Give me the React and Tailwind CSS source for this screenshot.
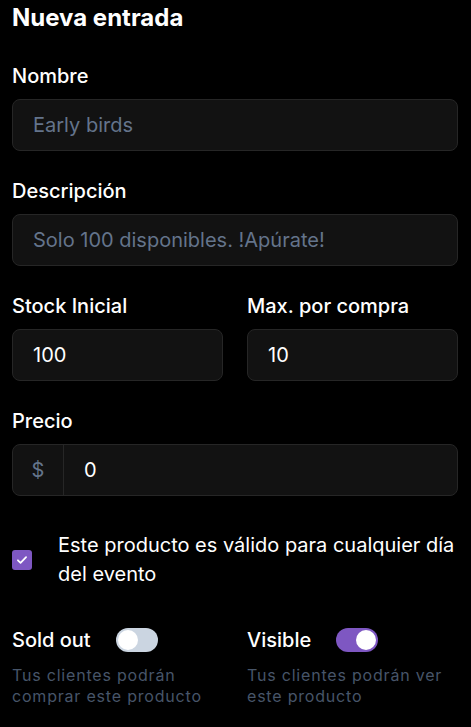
import { useState } from "react";

const inputClass =
  "h-[52px] w-full rounded-lg border border-[#262626] bg-[#121212] px-5 text-[20px] text-white outline-none placeholder:text-[#64748b]";

const labelClass = "block text-[20px] font-medium leading-[24px]";

function Toggle({ checked, onChange }) {
  return (
    <button
      className={`flex h-6 w-[42px] items-center rounded-full px-[2px] ${
        checked ? "justify-end bg-[#7e57c2]" : "justify-start bg-[#cbd5e1]"
      }`}
      onClick={() => onChange(!checked)}
      type="button"
    >
      <span className="h-5 w-5 rounded-full bg-white" />
    </button>
  );
}

export default function App() {
  const [soldOut, setSoldOut] = useState(false);
  const [visible, setVisible] = useState(true);
  const [anyDay, setAnyDay] = useState(true);

  return (
    <div
      className="min-h-[727px] bg-black pl-3 pr-[13px] pt-1 text-white"
      style={{ fontFamily: "Inter, 'Noto Sans', sans-serif" }}
    >
      <h1 className="text-[24px] font-bold leading-[28px]">Nueva entrada</h1>

      <label className={`mt-[32px] ${labelClass}`}>Nombre</label>
      <input className={`mt-[11px] ${inputClass}`} placeholder="Early birds" />

      <label className={`mt-[28px] ${labelClass}`}>Descripción</label>
      <input
        className={`mt-[11px] ${inputClass}`}
        placeholder="Solo 100 disponibles. !Apúrate!"
      />

      <div className="mt-[28px] grid grid-cols-2 gap-6">
        <div>
          <label className={labelClass}>Stock Inicial</label>
          <input className={`mt-[11px] ${inputClass}`} defaultValue="100" />
        </div>
        <div>
          <label className={labelClass}>Max. por compra</label>
          <input className={`mt-[11px] ${inputClass}`} defaultValue="10" />
        </div>
      </div>

      <label className={`mt-[28px] ${labelClass}`}>Precio</label>
      <div className="mt-[11px] flex h-[52px] w-full rounded-lg border border-[#262626] bg-[#121212]">
        <span className="flex w-[51px] shrink-0 items-center justify-center border-r border-[#262626] text-[20px] text-[#64748b]">
          $
        </span>
        <input
          className="w-full bg-transparent px-5 text-[20px] text-white outline-none"
          defaultValue="0"
        />
      </div>

      <div className="mt-[35px] flex items-center gap-[26px]">
        <button
          className={`flex h-5 w-5 shrink-0 items-center justify-center rounded-[3px] ${
            anyDay ? "bg-[#7e57c2]" : "border border-[#475569]"
          }`}
          onClick={() => setAnyDay(!anyDay)}
          type="button"
        >
          {anyDay ? (
            <svg className="h-3.5 w-3.5" fill="none" stroke="white" strokeLinecap="round" strokeLinejoin="round" strokeWidth="3" viewBox="0 0 24 24">
              <path d="M5 12.5l4.5 4.5L19 7" />
            </svg>
          ) : null}
        </button>
        <p className="text-[20px] leading-[29px]">
          Este producto es válido para cualquier día del evento
        </p>
      </div>

      <div className="mt-[39px] grid grid-cols-2 gap-6">
        <div>
          <div className="flex items-center gap-[25px]">
            <span className="text-[20px] font-medium leading-[24px]">Sold out</span>
            <Toggle checked={soldOut} onChange={setSoldOut} />
          </div>
          <p className="mt-[13px] text-[16px] leading-[21px] tracking-wider text-[#475569]">
            Tus clientes podrán comprar este producto
          </p>
        </div>
        <div>
          <div className="flex items-center gap-[25px]">
            <span className="text-[20px] font-medium leading-[24px]">Visible</span>
            <Toggle checked={visible} onChange={setVisible} />
          </div>
          <p className="mt-[13px] text-[16px] leading-[21px] tracking-wider text-[#475569]">
            Tus clientes podrán ver este producto
          </p>
        </div>
      </div>
    </div>
  );
}
